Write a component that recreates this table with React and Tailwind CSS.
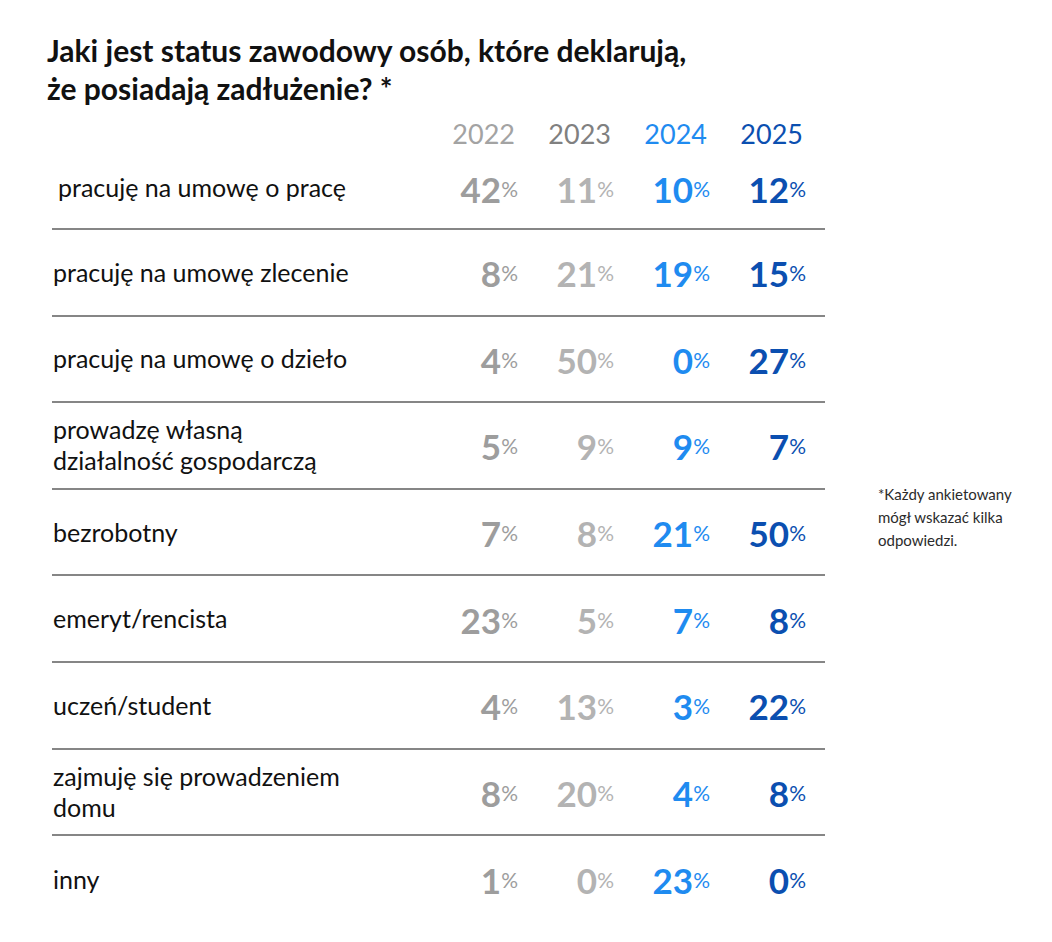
import React from "react";

const rows = [
  { label: "pracuję na umowę o pracę", values: [42, 11, 10, 12], indent: true },
  { label: "pracuję na umowę zlecenie", values: [8, 21, 19, 15] },
  { label: "pracuję na umowę o dzieło", values: [4, 50, 0, 27] },
  { label: ["prowadzę własną", "działalność gospodarczą"], values: [5, 9, 9, 7] },
  { label: "bezrobotny", values: [7, 8, 21, 50] },
  { label: "emeryt/rencista", values: [23, 5, 7, 8] },
  { label: "uczeń/student", values: [4, 13, 3, 22] },
  { label: ["zajmuję się prowadzeniem", "domu"], values: [8, 20, 4, 8] },
  { label: "inny", values: [1, 0, 23, 0] },
];

const years = [
  { year: "2022", color: "text-[#a3a3a3]", num: "text-[#9d9d9d]" },
  { year: "2023", color: "text-[#808080]", num: "text-[#b3b3b3]" },
  { year: "2024", color: "text-[#1f8bf0]", num: "text-[#1f8bf0]" },
  { year: "2025", color: "text-[#0b4fb0]", num: "text-[#0b4fb0]" },
];

const App = () => {
  return (
    <div className="w-[1052px] h-[942px] bg-white font-['Lato',sans-serif] text-[#111] overflow-hidden">
      <h1 className="pt-[31px] pl-[47px] text-[30px] leading-[38px] font-bold">
        Jaki jest status zawodowy osób, które deklarują,
        <br />
        że posiadają zadłużenie? *
      </h1>

      <div className="flex">
        <div className="ml-[52px] w-[773px]">
          <div className="grid grid-cols-[370px_96px_96px_96px_96px] pt-[13px] h-[40px]">
            <div />
            {years.map((y) => (
              <div
                key={y.year}
                className={`text-right pr-[3px] text-[27px] leading-[27px] ${y.color}`}
              >
                {y.year}
              </div>
            ))}
          </div>

          {rows.map((row, i) => (
            <div
              key={i}
              className={`grid grid-cols-[370px_96px_96px_96px_96px] items-center ${
                i === 0 ? "h-[83px]" : "h-[86.6px]"
              } ${i < rows.length - 1 ? "border-b-2 border-[#868686]" : ""}`}
            >
              <div
                className={`text-[25px] leading-[31px] text-[#111] ${
                  row.indent ? "pl-[6px]" : "pl-[1px]"
                }`}
              >
                {Array.isArray(row.label)
                  ? row.label.map((l) => <div key={l}>{l}</div>)
                  : row.label}
              </div>
              {row.values.map((v, j) => (
                <div key={j} className={`pt-[5px] text-right whitespace-nowrap ${years[j].num}`}>
                  <span className="text-[35px] font-bold leading-none">{v}</span>
                  <span className="text-[21px] leading-none align-[6px]">%</span>
                </div>
              ))}
            </div>
          ))}
        </div>

        <p className="ml-[53px] mt-[376px] w-[150px] text-[15px] leading-[23px] text-[#2b2b2b] self-start">
          *Każdy ankietowany mógł wskazać kilka odpowiedzi.
        </p>
      </div>
    </div>
  );
};

export default App;
